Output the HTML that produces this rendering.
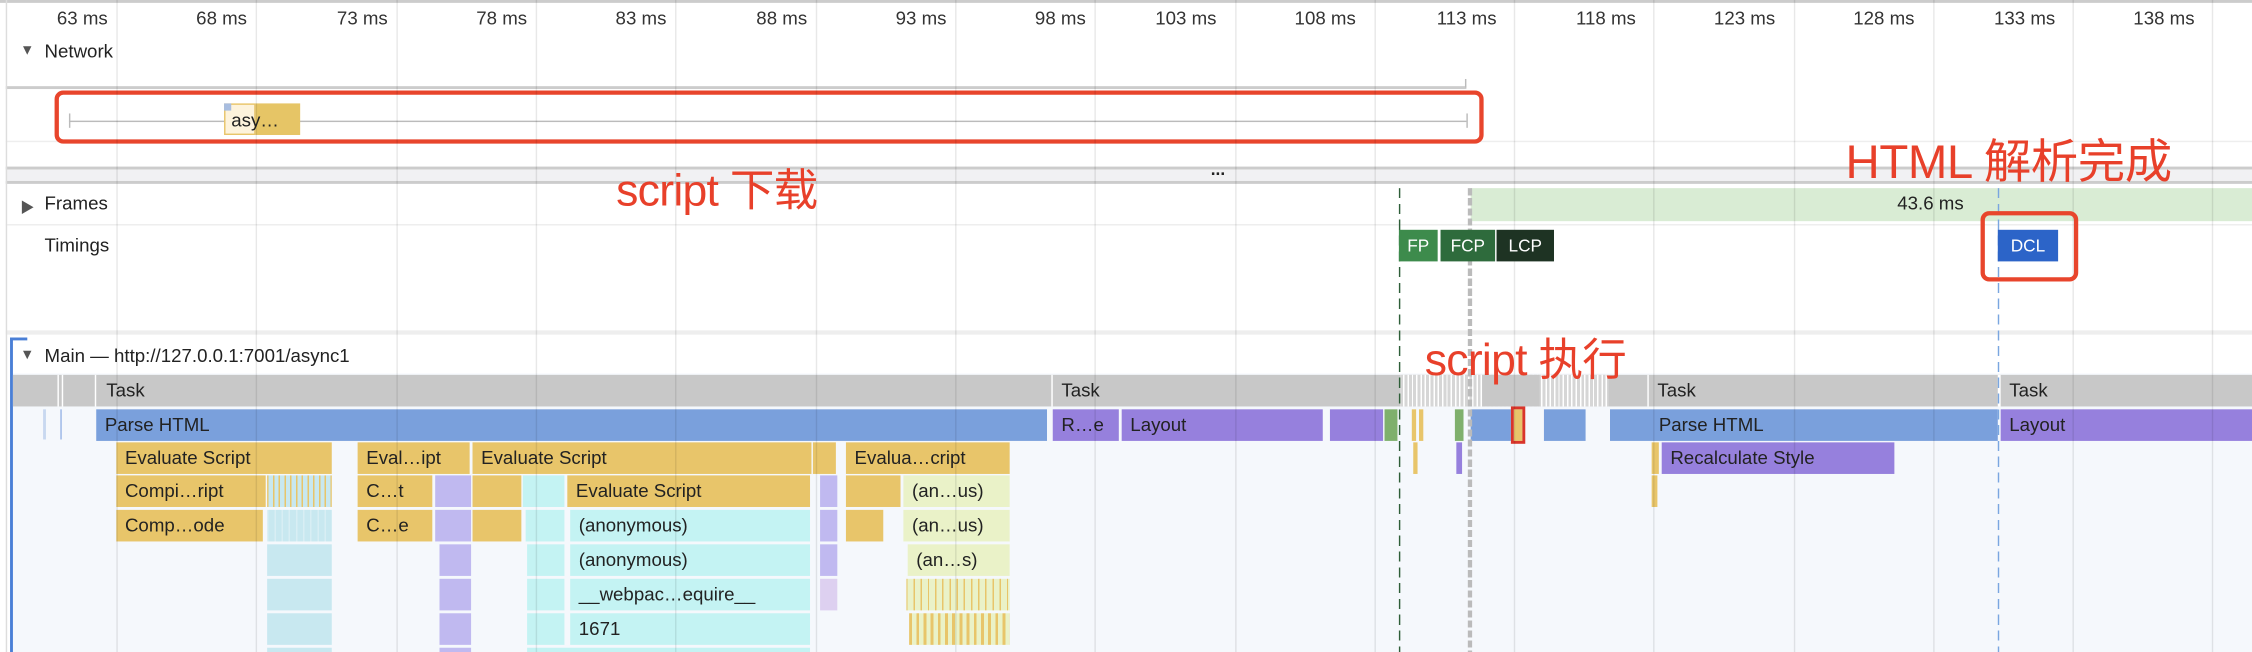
<!DOCTYPE html>
<html><head><meta charset="utf-8"><style>
html,body{margin:0;padding:0;background:#fff;overflow:hidden;width:2252px;height:652px}
#s{position:absolute;left:0;top:0;width:1568px;height:454px;transform:scale(1.436224);transform-origin:0 0;font-family:"Liberation Sans","Noto Sans CJK SC",sans-serif;font-size:13px;color:#222;overflow:hidden;background:#fff}
.a{position:absolute}
.b{position:absolute;height:22px;line-height:22px;padding-left:6px;box-sizing:border-box;overflow:hidden;white-space:nowrap;color:#222;font-size:13px}
.y{background:#e8c56a}.p{background:#9680dd}.bl{background:#7aa0dc}.c{background:#c4f3f3}.lb{background:#c8e8f0}.lp{background:#c0b9f0}.gy{background:#eaf2c8}
.g{position:absolute;top:0;width:1px;height:454px;background:rgba(0,0,0,0.09)}
.lbl{position:absolute;top:5px;font-size:13px;color:#333;text-align:right;width:60px}
.red{position:absolute;color:#e8402a;font-family:"Liberation Sans","Noto Sans CJK SC",sans-serif;white-space:nowrap}
.t{position:absolute;color:#fff;font-size:12px;height:22px;line-height:22px;text-align:center}
</style></head><body><div id="s">
<div class="a" style="left:0;top:0;width:1568px;height:2px;background:#ccc"></div>
<div class="lbl" style="left:15px">63 ms</div>
<div class="lbl" style="left:112px">68 ms</div>
<div class="lbl" style="left:210px">73 ms</div>
<div class="lbl" style="left:307px">78 ms</div>
<div class="lbl" style="left:404px">83 ms</div>
<div class="lbl" style="left:502px">88 ms</div>
<div class="lbl" style="left:599px">93 ms</div>
<div class="lbl" style="left:696px">98 ms</div>
<div class="lbl" style="left:787px">103 ms</div>
<div class="lbl" style="left:884px">108 ms</div>
<div class="lbl" style="left:982px">113 ms</div>
<div class="lbl" style="left:1079px">118 ms</div>
<div class="lbl" style="left:1176px">123 ms</div>
<div class="lbl" style="left:1273px">128 ms</div>
<div class="lbl" style="left:1371px">133 ms</div>
<div class="lbl" style="left:1468px">138 ms</div>
<div class="a" style="left:14px;top:30px;font-size:10px;color:#555">▼</div>
<div class="a" style="left:31px;top:28px">Network</div>
<div class="a" style="left:4px;top:60px;width:1017px;height:2px;background:#ccc"></div>
<div class="a" style="left:1020px;top:55px;width:1px;height:6px;background:#bbb"></div>
<div class="a" style="left:4px;top:98px;width:1564px;height:1px;background:#eee"></div>
<div class="a" style="left:48px;top:84px;width:973px;height:1px;background:#bbb"></div>
<div class="a" style="left:48px;top:79px;width:1px;height:10px;background:#bbb"></div>
<div class="a" style="left:1021px;top:79px;width:1px;height:10px;background:#bbb"></div>
<div class="a" style="left:156px;top:72px;width:22px;height:22px;background:#fdf3dc;border:1px solid #e8c56a;box-sizing:border-box"></div>
<div class="a" style="left:178px;top:72px;width:31px;height:22px;background:#e6c566"></div>
<div class="a" style="left:156px;top:72px;width:5px;height:5px;background:#a8bde0"></div>
<div class="a" style="left:161px;top:76px;font-size:13px">asy…</div>
<div class="a" style="left:38px;top:63px;width:995px;height:37px;border:3px solid #e8452c;border-radius:6px;box-sizing:border-box"></div>
<div class="a" style="left:4px;top:116px;width:1564px;height:12px;background:#f1f1f3;border-top:2px solid #ccc;border-bottom:2px solid #ccc;box-sizing:border-box"></div>
<div class="a" style="left:843px;top:111px;font-size:12px;font-weight:bold">...</div>
<div class="a" style="left:1024px;top:131px;width:544px;height:23px;background:#d9ecd4"></div>
<div class="a" style="left:1321px;top:134px">43.6 ms</div>
<div class="a" style="left:14px;top:136px;font-size:10px;color:#555">▶</div>
<div class="a" style="left:31px;top:134px">Frames</div>
<div class="a" style="left:4px;top:156px;width:1564px;height:1px;background:#eee"></div>
<div class="a" style="left:31px;top:163px">Timings</div>
<div class="a" style="left:4px;top:230px;width:1564px;height:3px;background:#eee"></div>
<div class="a" style="left:8px;top:260px;width:1560px;height:194px;background:#f5f8fc"></div>
<div class="a" style="left:7px;top:235px;width:2px;height:219px;background:#4a7fd6"></div>
<div class="a" style="left:7px;top:235px;width:12px;height:2px;background:#4a7fd6"></div>
<div class="a" style="left:14px;top:242px;font-size:10px;color:#555">▼</div>
<div class="a" style="left:31px;top:240px">Main — http://127.0.0.1:7001/async1</div>
<div class="a" style="left:9px;top:261px;width:1559px;height:22px;background:#c8c8c8"></div>
<div class="a" style="left:40px;top:261px;width:1px;height:22px;background:#fff"></div>
<div class="a" style="left:43px;top:261px;width:1px;height:22px;background:#fff"></div>
<div class="a" style="left:66px;top:261px;width:1px;height:22px;background:#fff"></div>
<div class="a" style="left:732px;top:261px;width:1px;height:22px;background:#fff"></div>
<div class="a" style="left:975px;top:261px;width:145px;height:22px;background:repeating-linear-gradient(90deg,#d6d6d6 0 2px,#fff 2px 3px)"></div>
<div class="a" style="left:1032px;top:261px;width:40px;height:22px;background:#c8c8c8"></div>
<div class="a" style="left:1147px;top:261px;width:1px;height:22px;background:#fff"></div>
<div class="a" style="left:1391px;top:261px;width:2px;height:22px;background:#fff"></div>
<div class="b" style="left:68px;top:261px">Task</div>
<div class="b" style="left:733px;top:261px">Task</div>
<div class="b" style="left:1148px;top:261px">Task</div>
<div class="b" style="left:1393px;top:261px">Task</div>
<div class="a" style="left:30px;top:285px;width:2px;height:21px;background:#c8d8f0"></div>
<div class="a" style="left:42px;top:285px;width:1px;height:21px;background:#9ab6e6"></div>
<div class="b bl" style="left:67px;top:285px;width:662px">Parse HTML</div>
<div class="b p" style="left:733px;top:285px;width:46px">R…e</div>
<div class="b p" style="left:781px;top:285px;width:140px">Layout</div>
<div class="a p" style="left:926px;top:285px;width:37px;height:22px"></div>
<div class="a" style="left:964px;top:285px;width:9px;height:22px;background:#7fb06c"></div>
<div class="a y" style="left:983px;top:285px;width:3px;height:22px"></div>
<div class="a y" style="left:988px;top:285px;width:3px;height:22px"></div>
<div class="a" style="left:1013px;top:285px;width:6px;height:22px;background:#7fb06c"></div>
<div class="a bl" style="left:1024px;top:285px;width:28px;height:22px"></div>
<div class="a y" style="left:1054px;top:285px;width:6px;height:22px;outline:2px solid #d9352a"></div>
<div class="a bl" style="left:1075px;top:285px;width:29px;height:22px"></div>
<div class="b bl" style="left:1121px;top:285px;width:270px;padding-left:34px">Parse HTML</div>
<div class="b p" style="left:1393px;top:285px;width:175px">Layout</div>
<div class="b y" style="left:81px;top:308px;width:150px">Evaluate Script</div>
<div class="b y" style="left:249px;top:308px;width:78px">Eval…ipt</div>
<div class="b y" style="left:329px;top:308px;width:236px">Evaluate Script</div>
<div class="a y" style="left:566px;top:308px;width:16px;height:22px"></div>
<div class="b y" style="left:589px;top:308px;width:114px">Evalua…cript</div>
<div class="a y" style="left:984px;top:308px;width:3px;height:22px"></div>
<div class="a p" style="left:1014px;top:308px;width:4px;height:22px"></div>
<div class="a y" style="left:1150px;top:308px;width:5px;height:22px"></div>
<div class="b p" style="left:1157px;top:308px;width:162px">Recalculate Style</div>
<div class="b y" style="left:81px;top:331px;width:104px">Compi…ript</div>
<div class="a" style="left:186px;top:331px;width:45px;height:22px;background:repeating-linear-gradient(90deg,#e8c56a 0 1px,#c8e8f0 1px 4px)"></div>
<div class="b y" style="left:249px;top:331px;width:52px">C…t</div>
<div class="a lp" style="left:303px;top:331px;width:25px;height:22px"></div>
<div class="a y" style="left:329px;top:331px;width:34px;height:22px"></div>
<div class="a c" style="left:364px;top:331px;width:29px;height:22px"></div>
<div class="b y" style="left:395px;top:331px;width:169px">Evaluate Script</div>
<div class="a lp" style="left:571px;top:331px;width:12px;height:22px"></div>
<div class="a y" style="left:589px;top:331px;width:38px;height:22px"></div>
<div class="b gy" style="left:629px;top:331px;width:74px">(an…us)</div>
<div class="a y" style="left:1150px;top:331px;width:4px;height:22px"></div>
<div class="b y" style="left:81px;top:355px;width:102px">Comp…ode</div>
<div class="a" style="left:186px;top:355px;width:45px;height:22px;background:repeating-linear-gradient(90deg,#d8eef4 0 1px,#c8e8f0 1px 5px)"></div>
<div class="b y" style="left:249px;top:355px;width:52px">C…e</div>
<div class="a lp" style="left:303px;top:355px;width:25px;height:22px"></div>
<div class="a y" style="left:329px;top:355px;width:34px;height:22px"></div>
<div class="a c" style="left:366px;top:355px;width:27px;height:22px"></div>
<div class="b c" style="left:397px;top:355px;width:167px">(anonymous)</div>
<div class="a lp" style="left:571px;top:355px;width:12px;height:22px"></div>
<div class="a y" style="left:589px;top:355px;width:26px;height:22px"></div>
<div class="b gy" style="left:629px;top:355px;width:74px">(an…us)</div>
<div class="a lb" style="left:186px;top:379px;width:45px;height:22px"></div>
<div class="a lp" style="left:306px;top:379px;width:22px;height:22px"></div>
<div class="a c" style="left:367px;top:379px;width:26px;height:22px"></div>
<div class="b c" style="left:397px;top:379px;width:167px">(anonymous)</div>
<div class="a lp" style="left:571px;top:379px;width:12px;height:22px"></div>
<div class="b gy" style="left:632px;top:379px;width:71px">(an…s)</div>
<div class="a lb" style="left:186px;top:403px;width:45px;height:22px"></div>
<div class="a lp" style="left:306px;top:403px;width:22px;height:22px"></div>
<div class="a c" style="left:367px;top:403px;width:26px;height:22px"></div>
<div class="b c" style="left:397px;top:403px;width:167px">__webpac…equire__</div>
<div class="a" style="left:571px;top:403px;width:12px;height:22px;background:#ddd0f0"></div>
<div class="a" style="left:631px;top:403px;width:72px;height:22px;background:repeating-linear-gradient(90deg,#e8c56a 0 1px,#eaf2c8 1px 5px)"></div>
<div class="a lb" style="left:186px;top:427px;width:45px;height:22px"></div>
<div class="a lp" style="left:306px;top:427px;width:22px;height:22px"></div>
<div class="a c" style="left:367px;top:427px;width:26px;height:22px"></div>
<div class="b c" style="left:397px;top:427px;width:167px">1671</div>
<div class="a" style="left:633px;top:427px;width:70px;height:22px;background:repeating-linear-gradient(90deg,#e8c56a 0 2px,#eaf2c8 2px 5px)"></div>
<div class="a lb" style="left:186px;top:451px;width:45px;height:3px"></div>
<div class="a lp" style="left:306px;top:451px;width:22px;height:3px"></div>
<div class="a c" style="left:367px;top:451px;width:197px;height:3px"></div>
<div class="g" style="left:81px"></div><div class="g" style="left:178px"></div><div class="g" style="left:276px"></div><div class="g" style="left:373px"></div><div class="g" style="left:470px"></div><div class="g" style="left:568px"></div><div class="g" style="left:665px"></div><div class="g" style="left:762px"></div><div class="g" style="left:860px"></div><div class="g" style="left:957px"></div><div class="g" style="left:1054px"></div><div class="g" style="left:1151px"></div><div class="g" style="left:1249px"></div><div class="g" style="left:1346px"></div><div class="g" style="left:1443px"></div><div class="g" style="left:1540px"></div>
<div class="a" style="left:4px;top:0;width:1px;height:454px;background:#ddd"></div>
<div class="a" style="left:974px;top:131px;width:1px;height:323px;background:repeating-linear-gradient(180deg,#2e5e38 0 7px,transparent 7px 11px)"></div>
<div class="a" style="left:1022px;top:131px;width:3px;height:323px;background:repeating-linear-gradient(180deg,#bbb 0 5px,transparent 5px 7px)"></div>
<div class="a" style="left:1391px;top:131px;width:1px;height:323px;background:repeating-linear-gradient(180deg,#7aa6e0 0 7px,transparent 7px 11px)"></div>
<div class="t" style="left:974px;top:160px;width:27px;background:#3d8b4c">FP</div>
<div class="t" style="left:1003px;top:160px;width:38px;background:#2e6b3c">FCP</div>
<div class="t" style="left:1042px;top:160px;width:40px;background:#1e3323">LCP</div>
<div class="t" style="left:1391px;top:160px;width:42px;background:#2c64c8">DCL</div>
<div class="a" style="left:1379px;top:147px;width:68px;height:49px;border:3px solid #e8452c;border-radius:6px;box-sizing:border-box"></div>
<div class="red" style="left:429px;top:107px;font-size:31px;letter-spacing:-0.5px">script 下载</div>
<div class="red" style="left:1285px;top:86px;font-size:33px;letter-spacing:-0.3px">HTML 解析完成</div>
<div class="red" style="left:992px;top:225px;font-size:31px;letter-spacing:-0.5px">script 执行</div>
</div></body></html>
